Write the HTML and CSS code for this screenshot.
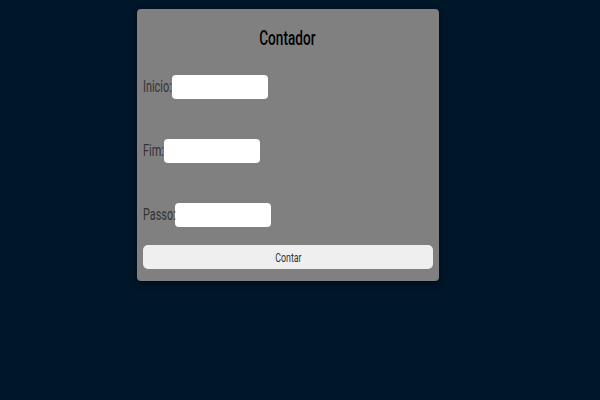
FILE: index.html
```html
<!DOCTYPE html>
<html lang="pt">
<head>
<meta charset="utf-8">
<title>Contador</title>
<link rel="stylesheet" href="styles.css">
</head>
<body>
<main class="card">
  <h1 class="title"><span class="squeeze squeeze-center">Contador</span></h1>
  <div class="row row-first"><label class="label label-inicio" for="inicio"><span class="squeeze">Inicio:</span></label><input class="field" id="inicio" type="text"></div>
  <div class="row"><label class="label label-fim" for="fim"><span class="squeeze">Fim:</span></label><input class="field" id="fim" type="text"></div>
  <div class="row"><label class="label label-passo" for="passo"><span class="squeeze">Passo:</span></label><input class="field" id="passo" type="text"></div>
  <button class="btn" type="button"><span class="squeeze squeeze-center">Contar</span></button>
</main>
</body>
</html>
```
FILE: styles.css
```css
html, body {
  margin: 0;
  padding: 0;
  height: 100%;
}
body {
  background: #001629;
  font-family: Roboto, "Liberation Sans", sans-serif;
  padding-top: 9px;
  box-sizing: border-box;
}
.card {
  width: 302px;
  margin-left: 137px;
  box-sizing: border-box;
  background: #808080;
  border-radius: 4px;
  padding: 0 6px 12px 5px;
  display: flex;
  flex-direction: column;
  box-shadow: 0 2px 6px rgba(0, 0, 0, 0.5);
}
.squeeze {
  display: inline-block;
  white-space: nowrap;
  transform: scaleX(0.68);
  transform-origin: left center;
}
.squeeze-center {
  transform-origin: center center;
}
.title {
  margin: 17px 0 0;
  font-size: 20px;
  line-height: 24px;
  font-weight: 500;
  text-align: center;
  color: #000;
}
.row {
  display: flex;
  align-items: center;
  height: 24px;
  margin-top: 40px;
}
.row-first {
  margin-top: 25px;
}
.label {
  font-size: 16px;
  color: #333;
  flex: none;
  white-space: nowrap;
  padding-left: 1px;
  margin-bottom: 2px;
  box-sizing: border-box;
}
.label-inicio { width: 30px; }
.label-fim { width: 22px; }
.label-passo { width: 33px; }
.field {
  width: 96px;
  height: 24px;
  box-sizing: border-box;
  border: none;
  border-radius: 4px;
  background: #fff;
  padding: 0 4px;
  margin: 0;
}
.btn {
  margin-top: 18px;
  height: 24px;
  width: 290px;
  margin-left: 1px;
  border: none;
  border-radius: 5px;
  background: #efefef;
  color: #333;
  font-family: inherit;
  font-size: 13px;
  padding: 0;
}
```
